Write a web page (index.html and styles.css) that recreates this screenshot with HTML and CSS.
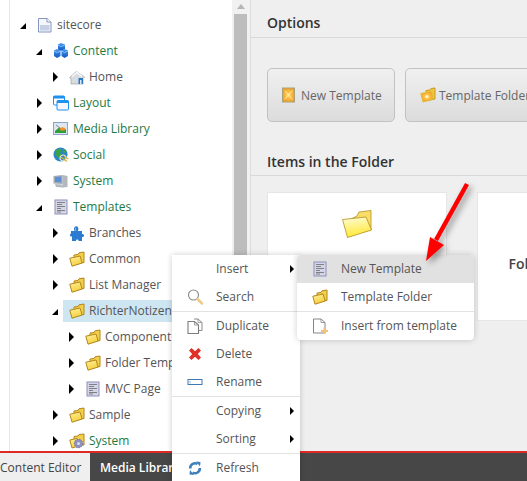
FILE: index.html
```html
<!DOCTYPE html>
<html lang="en">
<head>
  <meta charset="UTF-8" />
  <meta name="viewport" content="width=device-width, initial-scale=1.0" />
  <title>Sitecore Content Editor</title>
  <link rel="stylesheet" href="styles.css">
</head>
<body>
  <svg class="defs" aria-hidden="true">
    <defs>
      <linearGradient id="folderFill" x1="0" y1="0" x2="0.4" y2="1">
        <stop offset="0" stop-color="#fff3a0" />
        <stop offset="1" stop-color="#f5cf3c" />
      </linearGradient>
      <linearGradient id="folderBig" x1="0.3" y1="0" x2="0.5" y2="1">
        <stop offset="0" stop-color="#fffbd0" />
        <stop offset="1" stop-color="#ffe82e" />
      </linearGradient>
      <radialGradient id="starFill">
        <stop offset="0" stop-color="#fff6d8" />
        <stop offset="0.3" stop-color="#ffc94f" />
        <stop offset="1" stop-color="#f2a024" />
      </radialGradient>
      <linearGradient id="btnBlue" x1="0" y1="0" x2="0" y2="1">
        <stop offset="0" stop-color="#4a9bf0" />
        <stop offset="1" stop-color="#0f56c0" />
      </linearGradient>
      <symbol id="i-page" viewBox="0 0 16 16">
        <path d="M1.500 1.500H10L14 5V15H1.500Z" fill="#f4f6fb" stroke="#8496bd" stroke-width="1" />
        <path d="M10 1.500V5H14" fill="#fff" stroke="#8496bd" stroke-width="1" />
        <path d="M3 8H12.500V13.500H3Z" fill="#c6cfe4" />
      </symbol>
      <symbol id="i-cubes" viewBox="0 0 16 16">
        <path d="M5 1.500 8 0 12 1.500V6L8 8 5 6.500Z" fill="url(#btnBlue)" />
        <path d="M1 7.500 4 6 7.500 7.500V13L4 15 1 13Z" fill="url(#btnBlue)" />
        <path d="M8.500 7.500 11.500 6 15 7.500V13L11.500 15 8.500 13Z" fill="url(#btnBlue)" />
        <path d="M5 2 8 3.500 12 2M1 8 4 9.500 7.500 8M8.500 8 11.500 9.500 15 8" fill="none" stroke="#9fd0ff" stroke-width=".7" />
      </symbol>
      <symbol id="i-home" viewBox="0 0 16 16">
        <path d="M.5 8.500 7.500 2.500 15.500 8 14 9.500V15H2V9.500Z" fill="#d9dcdf" stroke="#a5abb2" stroke-width=".8" />
        <path d="M3 7.500 8 3.500 13 7.500" fill="none" stroke="#f7f9fb" stroke-width="1.400" />
        <path d="M9.500 9H14V15H9.500Z" fill="#2a78c4" />
        <path d="M11 11H12.500V15H11Z" fill="#dbe9f6" />
      </symbol>
      <symbol id="i-layout" viewBox="0 0 16 16">
        <rect x=".5" y="1" width="11" height="9" rx="1" fill="#fff" stroke="#1e90ee" />
        <rect x=".5" y="1" width="11" height="2.500" fill="#1e90ee" />
        <rect x="4" y="5.500" width="11.500" height="9.500" rx="1" fill="#f4f7fb" stroke="#1e90ee" />
        <rect x="4" y="5.500" width="11.500" height="2.500" fill="#1e90ee" />
      </symbol>
      <symbol id="i-media" viewBox="0 0 16 16">
        <rect x=".5" y="1.500" width="14" height="12" fill="#dbe5f2" stroke="#8ca6c8" />
        <rect x="2" y="3" width="11" height="9" fill="#dfe8ef" />
        <path d="M2 10 6 6.500 10 9 13 8V12H2Z" fill="#2f9e3b" />
        <ellipse cx="9.500" cy="8" rx="2.800" ry="1.800" fill="#f0902a" />
        <path d="M3 4 7 7" stroke="#7c8b95" stroke-width="1" />
      </symbol>
      <symbol id="i-globe" viewBox="0 0 16 16">
        <circle cx="7.500" cy="7.500" r="7" fill="#2d86c4" />
        <path d="M2 4 6 1.500 9 3 7 6 9 8 6 11 3.500 9 2.500 7Z" fill="#3ba345" />
        <path d="M10 1.500 13.500 4 12 6 10 4Z" fill="#3ba345" />
        <circle cx="10" cy="11" r="3" fill="none" stroke="#e8e4d8" stroke-width="1.200" />
        <path d="M8 10 14 14.500M11 9.500 15.500 12" stroke="#d9b43a" stroke-width="1.300" />
      </symbol>
      <symbol id="i-system" viewBox="0 0 16 16">
        <path d="M9.500 2 14.500 3V14L9.500 14.500Z" fill="#b4b8be" />
        <path d="M.5 3 9.500 2V11L.5 10.500Z" fill="#a3abb6" />
        <path d="M2 4.200 8.300 3.500V9.300L2 9Z" fill="#5d90d2" />
        <path d="M2 11 9 11.500 10.500 14.500 3 14Z" fill="#b4b8be" />
      </symbol>
      <symbol id="i-template" viewBox="0 0 16 16">
        <rect x="2" y="1" width="12" height="14" fill="#d5d5ea" stroke="#8f8fb8" />
        <path d="M4 3.500H12M4 5.500H9M4 7.500H12M4 9.500H8M4 11.500H12M4 13H8" stroke="#777" stroke-width=".9" />
      </symbol>
      <symbol id="i-puzzle" viewBox="0 0 16 16">
        <path d="M2 6H5.500C4.500 4 5 1.500 7 1.200 9 1 10 3 9 6H13V9C15.500 8.500 16 12.500 13 12V16H9.500C10 14 6.500 14 7 16H3V11.500C1 12 0 9.500 2 8.500Z" fill="#2b7bd0" />
        <path d="M7 2.500C6 3.500 6.500 5 7 6" stroke="#8fc0ee" fill="none" />
      </symbol>
      <symbol id="i-folder" viewBox="0 0 16 16">
        <path d="M5 5.500V4L9 3.500 10 1.800 15 1V11.500L5 13Z" fill="#f2cf4a" stroke="#b3861d" />
        <path d="M.8 7.200 11 5 13.200 12 3 15.200Z" fill="url(#folderFill)" stroke="#b3861d" />
      </symbol>
      <symbol id="i-folder-big" viewBox="0 0 30 30">
        <path d="M9 9 15 6 17 2 29 .5V20L9 24Z" fill="#f8de68" stroke="#b3901f" stroke-width=".8" />
        <path d="M.5 9.500 24 7 29.500 20 5.500 27.500Z" fill="url(#folderBig)" stroke="#b3901f" stroke-width=".8" />
      </symbol>
      <symbol id="i-folder-gear" viewBox="0 0 16 16">
        <path d="M5 5V3.500L9 3 10 1.500 15 1V12L5 13Z" fill="#f2cf4a" stroke="#b3861d" />
        <path d="M.8 7 8 5.500 11 12.500 3 15Z" fill="url(#folderFill)" stroke="#b3861d" />
        <circle cx="9.500" cy="10.500" r="4.200" fill="#8f90c4" stroke="#6e6f9e" stroke-dasharray="1.500 1" />
        <circle cx="9.500" cy="10.500" r="1.500" fill="#dcdcef" />
      </symbol>
      <symbol id="i-new-tpl" viewBox="0 0 16 16">
        <rect x=".5" y="1" width="12" height="14" fill="url(#starFill)" stroke="#a9a27a" />
        <path d="M2.500 3.500 10.500 12.500M10.500 3.500 2.500 12.500" stroke="#ffe9ae" stroke-width="1" />
      </symbol>
      <symbol id="i-tpl-folder" viewBox="0 0 16 16">
        <path d="M6 3.500 10 3 11 1.500 15 1V12L6 14Z" fill="#f2c53c" stroke="#c59b24" />
        <path d="M.8 6.500 11.500 4.500 13 12 3 15Z" fill="url(#starFill)" stroke="#e6b93a" />
        <circle cx="7" cy="9.500" r="1.500" fill="#fff3c9" />
      </symbol>
      <symbol id="i-search" viewBox="0 0 16 16">
        <circle cx="6.500" cy="6" r="5" fill="#fff" stroke="#8a8a8a" stroke-width="1.100" />
        <path d="M10.500 10 15 14.500" stroke="#efc98a" stroke-width="2.500" stroke-linecap="round" />
      </symbol>
      <symbol id="i-copy" viewBox="0 0 16 16">
        <path d="M7 1H11L15 4.500V12.500H12" fill="none" stroke="#8a8a8a" />
        <path d="M1 3.500H7.500L11.500 7V15.500H1Z" fill="#fff" stroke="#7d7d7d" stroke-width="1.100" />
        <path d="M7.500 3.500V7H11.500M11 1V4.500H15" fill="none" stroke="#8a8a8a" stroke-width=".8" />
      </symbol>
      <symbol id="i-delete" viewBox="0 0 16 16">
        <path d="M2 4.500 4.500 2 8 5.200 11.500 2 14 4.500 10.800 8 14 11.500 11.500 14 8 10.800 4.500 14 2 11.500 5.200 8Z" fill="#df3228" />
      </symbol>
      <symbol id="i-rename" viewBox="0 0 16 16">
        <rect x="1" y="5.500" width="14" height="5" fill="#fff" stroke="#3d78b5" />
        <path d="M3 7V9.500" stroke="#9db7d2" />
      </symbol>
      <symbol id="i-refresh" viewBox="0 0 16 16">
        <path d="M3.200 8.500A4.800 4.800 0 0 1 10.500 4" fill="none" stroke="#3f7fbd" stroke-width="2.600" />
        <path d="M12.800 8A4.800 4.800 0 0 1 5.500 12.500" fill="none" stroke="#3f7fbd" stroke-width="2.600" />
        <path d="M9 1.500 13.500 2 13 6.500ZM7 15 2.500 14.500 3 10Z" fill="#3f7fbd" />
      </symbol>
      <symbol id="i-from-tpl" viewBox="0 0 16 16">
        <path d="M1.500 1H9L13 4.500V15H1.500Z" fill="#fff" stroke="#858585" />
        <path d="M9 1V4.500H13" fill="none" stroke="#858585" stroke-width=".8" />
        <path d="M9 13H16M12.500 9.500V16" stroke="#efc37d" stroke-width="2.200" />
      </symbol>
    </defs>
  </svg>

  <div class="main">
    <div class="tree-pane">
      <ul class="tree">
        <li>
          <div class="node"><span class="tw open"></span><span class="label"><svg class="ico"><use href="#i-page" /></svg>sitecore</span></div>
          <ul>
            <li>
              <div class="node"><span class="tw open"></span><span class="label green"><svg class="ico"><use href="#i-cubes" /></svg>Content</span></div>
              <ul>
                <li><div class="node"><span class="tw"></span><span class="label"><svg class="ico"><use href="#i-home" /></svg>Home</span></div></li>
              </ul>
            </li>
            <li><div class="node"><span class="tw"></span><span class="label green"><svg class="ico"><use href="#i-layout" /></svg>Layout</span></div></li>
            <li><div class="node"><span class="tw"></span><span class="label green"><svg class="ico"><use href="#i-media" /></svg>Media Library</span></div></li>
            <li><div class="node"><span class="tw"></span><span class="label green"><svg class="ico"><use href="#i-globe" /></svg>Social</span></div></li>
            <li><div class="node"><span class="tw"></span><span class="label green"><svg class="ico"><use href="#i-system" /></svg>System</span></div></li>
            <li>
              <div class="node"><span class="tw open"></span><span class="label green"><svg class="ico"><use href="#i-template" /></svg>Templates</span></div>
              <ul>
                <li><div class="node"><span class="tw"></span><span class="label"><svg class="ico"><use href="#i-puzzle" /></svg>Branches</span></div></li>
                <li><div class="node"><span class="tw"></span><span class="label"><svg class="ico"><use href="#i-folder" /></svg>Common</span></div></li>
                <li><div class="node"><span class="tw"></span><span class="label"><svg class="ico"><use href="#i-folder" /></svg>List Manager</span></div></li>
                <li>
                  <div class="node"><span class="tw open"></span><span class="label selected"><svg class="ico"><use href="#i-folder" /></svg>RichterNotizen</span></div>
                  <ul>
                    <li><div class="node"><span class="tw"></span><span class="label"><svg class="ico"><use href="#i-folder" /></svg>Component</span></div></li>
                    <li><div class="node"><span class="tw"></span><span class="label"><svg class="ico"><use href="#i-folder" /></svg>Folder Temp</span></div></li>
                    <li><div class="node"><span class="tw"></span><span class="label"><svg class="ico"><use href="#i-template" /></svg>MVC Page</span></div></li>
                  </ul>
                </li>
                <li><div class="node"><span class="tw"></span><span class="label"><svg class="ico"><use href="#i-folder" /></svg>Sample</span></div></li>
                <li><div class="node"><span class="tw"></span><span class="label green"><svg class="ico"><use href="#i-folder-gear" /></svg>System</span></div></li>
              </ul>
            </li>
          </ul>
        </li>
      </ul>
    </div>
    <div class="scrollbar"><span class="scroll-up"></span><div class="scroll-thumb"></div></div>
    <div class="content">
      <h2 class="head head-first">Options</h2>
      <div class="buttons">
        <div class="btn btn-new"><svg class="ico"><use href="#i-new-tpl" /></svg>New Template</div>
        <div class="btn"><svg class="ico"><use href="#i-tpl-folder" /></svg>Template Folder</div>
      </div>
      <h2 class="head">Items in the Folder</h2>
      <div class="cards">
        <div class="card"><svg class="ico-big"><use href="#i-folder-big" /></svg></div>
        <div class="card"><div class="card-spacer"></div><div class="card-title">Folder Templates</div></div>
      </div>
    </div>
  </div>

  <div class="taskbar">
    <div class="tab tab-light">Content Editor</div>
    <div class="tab tab-dark">Media Library</div>
  </div>

  <div class="menu">
    <div class="mi"><span class="mi-icon"></span>Insert<span class="more"></span></div>
    <div class="mi"><svg class="mi-icon"><use href="#i-search" /></svg>Search</div>
    <div class="sep"></div>
    <div class="mi"><svg class="mi-icon"><use href="#i-copy" /></svg>Duplicate</div>
    <div class="mi"><svg class="mi-icon"><use href="#i-delete" /></svg>Delete</div>
    <div class="mi"><svg class="mi-icon"><use href="#i-rename" /></svg>Rename</div>
    <div class="sep"></div>
    <div class="mi"><span class="mi-icon"></span>Copying<span class="more"></span></div>
    <div class="mi"><span class="mi-icon"></span>Sorting<span class="more"></span></div>
    <div class="sep"></div>
    <div class="mi"><svg class="mi-icon"><use href="#i-refresh" /></svg>Refresh</div>
  </div>

  <div class="menu submenu">
    <div class="mi active"><svg class="mi-icon"><use href="#i-template" /></svg>New Template</div>
    <div class="mi"><svg class="mi-icon"><use href="#i-folder" /></svg>Template Folder</div>
    <div class="sep"></div>
    <div class="mi"><svg class="mi-icon"><use href="#i-from-tpl" /></svg>Insert from template</div>
  </div>

  <svg class="callout" viewBox="0 0 60 90" aria-hidden="true">
    <path d="M47 4 16 60" stroke="#f00" stroke-width="4.500" fill="none" />
    <path d="M6 81 10 57 24 65Z" fill="#f00" />
  </svg>
</body>
</html>
```

FILE: styles.css
```css
* {
  box-sizing: border-box;
}
html, body {
  margin: 0;
  height: 481px;
  overflow: hidden;
}
body {
  position: relative;
  font-family: "Open Sans", sans-serif;
  font-size: 12px;
  color: #555;
  background: #efefef;
}
.defs {
  display: block;
  width: 0;
  height: 0;
}
.main {
  display: flex;
  height: 451px;
  overflow: hidden;
}

/* tree */
.tree-pane {
  width: 232px;
  flex: none;
  background: #fff;
  padding-left: 20px;
  padding-top: 12px;
  overflow: hidden;
  background-image: linear-gradient(#e6e6e6, #e6e6e6);
  background-size: 1px 100%;
  background-position: 9px 0;
  background-repeat: no-repeat;
}
.tree, .tree ul {
  list-style: none;
  margin: 0;
  padding: 0;
}
.tree ul {
  padding-left: 16px;
}
.node {
  display: flex;
  align-items: center;
  height: 26px;
  white-space: nowrap;
}
.tw {
  flex: none;
  width: 17px;
  height: 11px;
  display: flex;
  align-items: center;
}
.tw::before {
  content: "";
  margin-left: 1px;
  border-left: 5px solid #000;
  border-top: 5px solid transparent;
  border-bottom: 5px solid transparent;
}
.tw.open::before {
  margin-left: 0;
  margin-top: 1px;
  border-top: 0;
  border-left: 6px solid transparent;
  border-bottom: 6px solid #000;
}
/* the 2px bottom padding lifts the text 1px, the icons take it back */
.label {
  display: flex;
  align-items: center;
  gap: 4px;
  height: 22px;
  padding-bottom: 2px;
  color: #555;
}
.green {
  color: #1e7a44;
}
.selected {
  background: #cde6f2;
  margin-left: -6px;
  padding-left: 6px;
  padding-right: 10px;
}
.ico, .mi-icon {
  flex: none;
  width: 16px;
  height: 16px;
}
.label .ico, .mi-icon {
  margin-top: 2px;
}

/* scrollbar */
.scrollbar {
  flex: none;
  width: 19px;
  background: #f1f1f1;
  border-right: 1px solid #dcdcdc;
  padding: 0 3px 0 2px;
}
.scroll-up {
  display: block;
  width: 0;
  margin: 4px auto 0;
  border-left: 4px solid transparent;
  border-right: 4px solid transparent;
  border-bottom: 5px solid #b5b5b5;
}
.scroll-thumb {
  margin-top: 5px;
  height: 500px;
  background: #bdbdbd;
}

/* right side */
.content {
  flex: 1;
  min-width: 0;
  background: #efefef;
}
.head {
  margin: 30px 0 0;
  height: 24px;
  padding-left: 16px;
  font-size: 14px;
  font-weight: 600;
  line-height: 19px;
  color: #333;
  border-bottom: 1px solid #d9d9d9;
}
.head-first {
  margin-top: 13px;
  margin-bottom: 30px;
  height: 25px;
}
.buttons {
  display: flex;
  gap: 10px;
  padding-left: 16px;
}
.btn {
  flex: none;
  display: flex;
  align-items: center;
  gap: 3px;
  height: 54px;
  padding: 0 14px;
  color: #666;
  white-space: nowrap;
  border: 1px solid #c2c2c2;
  border-radius: 5px;
  background: linear-gradient(#f0f0f0, #dcdcdc);
}
.btn-new {
  width: 128px;
}
.cards {
  display: flex;
  gap: 30px;
  margin-top: 16px;
  padding-left: 16px;
}
.card {
  flex: none;
  display: flex;
  flex-direction: column;
  align-items: center;
  width: 180px;
  height: 129px;
  padding-top: 17px;
  background: #fff;
  border: 1px solid #e6e6e6;
}
.ico-big {
  width: 30px;
  height: 30px;
}
.card-spacer {
  height: 30px;
}
.card-title {
  margin-top: 14px;
  font-size: 14px;
  font-weight: 600;
  line-height: 20px;
  color: #444;
  white-space: nowrap;
}

/* bottom bar */
.taskbar {
  display: flex;
  height: 30px;
  background: #474747;
  border-top: 2px solid #dd2a22;
}
.tab {
  display: flex;
  align-items: center;
  white-space: nowrap;
}
.tab-light {
  width: 90px;
  background: #efefef;
  color: #444;
}
.tab-dark {
  padding-left: 10px;
  color: #fff;
  font-weight: 600;
}

/* context menus */
.menu {
  position: absolute;
  left: 172px;
  top: 255px;
  width: 128px;
  background: #fff;
  color: #555;
  box-shadow: 0 0 6px rgba(0,0,0,0.2);
}
.submenu {
  left: 297px;
  width: 177px;
  border-radius: 4px;
  overflow: hidden;
}
.mi {
  display: flex;
  align-items: center;
  gap: 13px;
  height: 28px;
  padding: 0 6px 2px 15px;
  white-space: nowrap;
}
.mi.active {
  background: #e1e1e1;
}
.sep {
  height: 1px;
  background: #e3e3e3;
}
.more {
  margin-left: auto;
  margin-top: 2px;
  border-left: 4px solid #000;
  border-top: 4px solid transparent;
  border-bottom: 4px solid transparent;
}

/* red annotation arrow */
.callout {
  position: absolute;
  left: 420px;
  top: 180px;
  width: 60px;
  height: 90px;
  filter: drop-shadow(3px 3px 3px rgba(0,0,0,0.4));
}
```
